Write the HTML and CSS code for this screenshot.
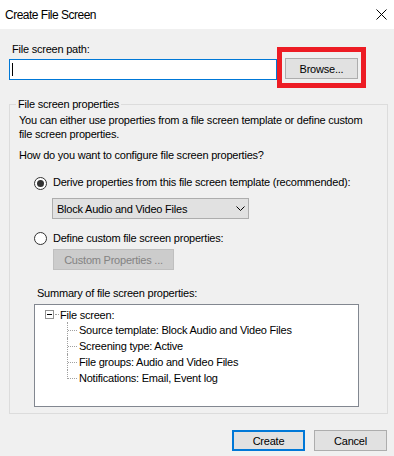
FILE: index.html
```html
<!DOCTYPE html>
<html lang="en">
<head>
    <meta charset="UTF-8">
    <meta name="viewport" content="width=device-width, initial-scale=1.0">
    <title>Create File Screen</title>
    <link rel="stylesheet" href="styles.css">
</head>
<body>
    <div class="titlebar">
        <span class="title">Create File Screen</span>
        <svg class="close" width="11" height="11" viewBox="0 0 11 11">
            <path d="M0.5 0.5L10.5 10.5M10.5 0.5L0.5 10.5" stroke="#000" stroke-width="1" fill="none"/>
        </svg>
    </div>

    <div class="content">
        <div class="path-label">File screen path:</div>
        <div class="path-row">
            <div class="path-input"><span class="caret"></span></div>
            <div class="browse-wrap">
                <button class="btn">Browse...</button>
            </div>
        </div>

        <fieldset class="props">
            <legend>File screen properties</legend>
            <p class="desc">You can either use properties from a file screen template or define custom<br>file screen properties.</p>
            <p class="question">How do you want to configure file screen properties?</p>

            <div class="radio-row first">
                <span class="radio checked"></span>
                <span>Derive properties from this file screen template (recommended):</span>
            </div>
            <div class="combo">
                <span>Block Audio and Video Files</span>
                <svg width="9" height="5" viewBox="0 0 9 5">
                    <path d="M0.5 0.5L4.5 4.5L8.5 0.5" stroke="#000" stroke-width="1" fill="none"/>
                </svg>
            </div>

            <div class="radio-row second">
                <span class="radio"></span>
                <span>Define custom file screen properties:</span>
            </div>
            <button class="btn custom" disabled>Custom Properties ...</button>

            <div class="summary-label">Summary of file screen properties:</div>
            <div class="tree">
                <div class="tree-root">
                    <span class="expander"></span>
                    <span class="root-dots"></span>
                    <span>File screen:</span>
                </div>
                <ul class="tree-children">
                    <li>Source template: Block Audio and Video Files</li>
                    <li>Screening type: Active</li>
                    <li>File groups: Audio and Video Files</li>
                    <li>Notifications: Email, Event log</li>
                </ul>
            </div>
        </fieldset>

        <div class="actions">
            <button class="btn primary">Create</button>
            <button class="btn">Cancel</button>
        </div>
    </div>
</body>
</html>
```

FILE: styles.css
```css
*, *::before, *::after {
    margin: 0;
    padding: 0;
    box-sizing: border-box;
}

body {
    width: 394px;
    height: 456px;
    overflow: hidden;
    background: #f0f0f0;
    font-family: "Liberation Sans", Arial, sans-serif;
    font-size: 11px;
    line-height: 14px;
    letter-spacing: -0.22px;
    color: #000;
}

.titlebar {
    height: 29px;
    background: #fff;
    display: flex;
    align-items: center;
    justify-content: space-between;
    padding: 0 7px 0 5px;
}

.title {
    font-size: 12px;
    letter-spacing: -0.5px;
}

.close {
    display: block;
}

.content {
    padding: 0 6px 0 9px;
}

.path-label {
    margin: 13px 0 0 3px;
}

.path-row {
    display: flex;
    margin-top: 3px;
}

.path-input {
    width: 268px;
    height: 21px;
    background: #fff;
    border: 1px solid #0078d7;
    display: flex;
    align-items: center;
    padding-left: 2px;
}

.caret {
    width: 1px;
    height: 13px;
    background: #000;
}

.browse-wrap {
    position: relative;
    margin: -1px 0 0 8px;
}

/* red highlight drawn over the screenshot */
.browse-wrap::after {
    content: "";
    position: absolute;
    left: -8px;
    top: -11px;
    width: 89px;
    height: 41px;
    border: 5px solid #ed1c24;
}

.btn {
    display: block;
    width: 73px;
    height: 21px;
    background: #e1e1e1;
    border: 1px solid #adadad;
    font: inherit;
    letter-spacing: inherit;
    color: #000;
}

.btn.primary {
    border: 2px solid #0078d7;
}

.props {
    margin-top: 18px;
    border: 1px solid #dcdcdc;
    padding: 0 8px 6px 9px;
    min-width: 0;
}

.props legend {
    padding: 0 2px;
    margin-left: -3px;
    line-height: 13px;
}

.desc {
    margin-top: 2px;
}

.question {
    margin-top: 7px;
}

.radio-row {
    display: flex;
    align-items: flex-start;
    margin-left: 15px;
}

.radio-row.first {
    margin-top: 13px;
}

.radio-row.second {
    margin-top: 12px;
}

.radio {
    width: 13px;
    height: 13px;
    flex-shrink: 0;
    border: 1px solid #333;
    border-radius: 50%;
    background: #fff;
    margin: 2px 6px 0 0;
    display: flex;
    align-items: center;
    justify-content: center;
}

.radio-row.second .radio {
    margin-top: 1px;
}

.radio.checked::before {
    content: "";
    width: 7px;
    height: 7px;
    border-radius: 50%;
    background: #333;
}

.combo {
    width: 197px;
    height: 21px;
    margin: 8px 0 0 33px;
    border: 1px solid #adadad;
    background: #e1e1e1;
    display: flex;
    align-items: center;
    justify-content: space-between;
    padding: 0 3px 0 4px;
}

.combo svg {
    display: block;
}

.btn.custom {
    width: 121px;
    margin: 4px 0 0 34px;
    background: #cccccc;
    border-color: #bfbfbf;
    color: #838383;
}

.summary-label {
    margin: 16px 0 0 18px;
}

.tree {
    width: 325px;
    height: 103px;
    margin: 4px 0 0 15px;
    background: #fff;
    border: 1px solid #828790;
    padding: 2px 0 0 10px;
}

.tree-root {
    display: flex;
    align-items: center;
    height: 15px;
}

.expander {
    position: relative;
    width: 9px;
    height: 9px;
    border: 1px solid #919191;
    background: #fff;
}

.expander::before {
    content: "";
    position: absolute;
    left: 1px;
    top: 3px;
    width: 5px;
    height: 1px;
    background: #000;
}

.root-dots {
    width: 4px;
    border-top: 1px dotted #a0a0a0;
    margin: 0 1px 0 1px;
}

.tree-children {
    list-style: none;
    margin-left: 22px;
}

.tree-children li {
    position: relative;
    height: 16px;
    line-height: 16px;
    padding-left: 12px;
}

.tree-children li::before {
    content: "";
    position: absolute;
    left: 1px;
    top: 8px;
    width: 9px;
    border-top: 1px dotted #a0a0a0;
}

.tree-children li::after {
    content: "";
    position: absolute;
    left: 0;
    top: 0;
    bottom: 0;
    border-left: 1px dotted #a0a0a0;
}

.tree-children li:last-child::after {
    bottom: auto;
    height: 9px;
}

.actions {
    display: flex;
    justify-content: flex-end;
    gap: 9px;
    margin-top: 16px;
    padding-right: 1px;
}
```
